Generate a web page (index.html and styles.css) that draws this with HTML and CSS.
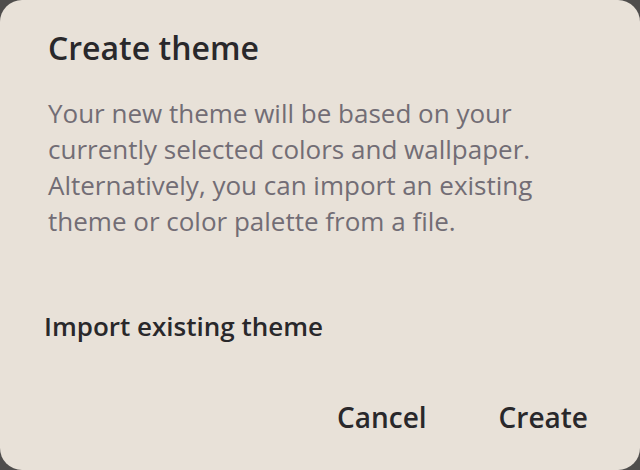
FILE: index.html
```html
<!DOCTYPE html>
<html>
<head>
<meta charset="utf-8">
<link rel="stylesheet" href="styles.css">
</head>
<body>
<div class="dialog">
  <h1 class="title">Create theme</h1>
  <p class="desc">Your new theme will be based on your currently selected colors and wallpaper. Alternatively, you can import an existing theme or color palette from a file.</p>
  <div class="import">Import existing theme</div>
  <div class="actions">
    <button class="btn">Cancel</button>
    <button class="btn">Create</button>
  </div>
</div>
</body>
</html>
```

FILE: styles.css
```css
html, body {
  margin: 0;
  padding: 0;
  width: 640px;
  height: 470px;
  background: #4f4d4c;
  overflow: hidden;
}
.dialog {
  box-sizing: border-box;
  width: 640px;
  height: 470px;
  background: #e8e1d8;
  border-radius: 22px;
  padding: 28px 48px 0 48px;
  font-family: "Open Sans", sans-serif;
  display: flex;
  flex-direction: column;
}
.title {
  margin: 0;
  font-size: 32px;
  font-weight: 600;
  line-height: 40px;
  color: #29282b;
}
.desc {
  margin: 27px 0 0 0;
  font-size: 26px;
  line-height: 36px;
  color: #726d75;
  width: 510px;
}
.import {
  margin: 72px 0 0 -4px;
  font-size: 26px;
  font-weight: 600;
  line-height: 30px;
  color: #29282b;
}
.actions {
  margin-top: 59px;
  display: flex;
  justify-content: flex-end;
  gap: 72px;
  padding-right: 4px;
}
.btn {
  border: none;
  background: none;
  padding: 0;
  font-family: "Open Sans", sans-serif;
  font-size: 28px;
  font-weight: 600;
  line-height: 34px;
  color: #29282b;
}
```
